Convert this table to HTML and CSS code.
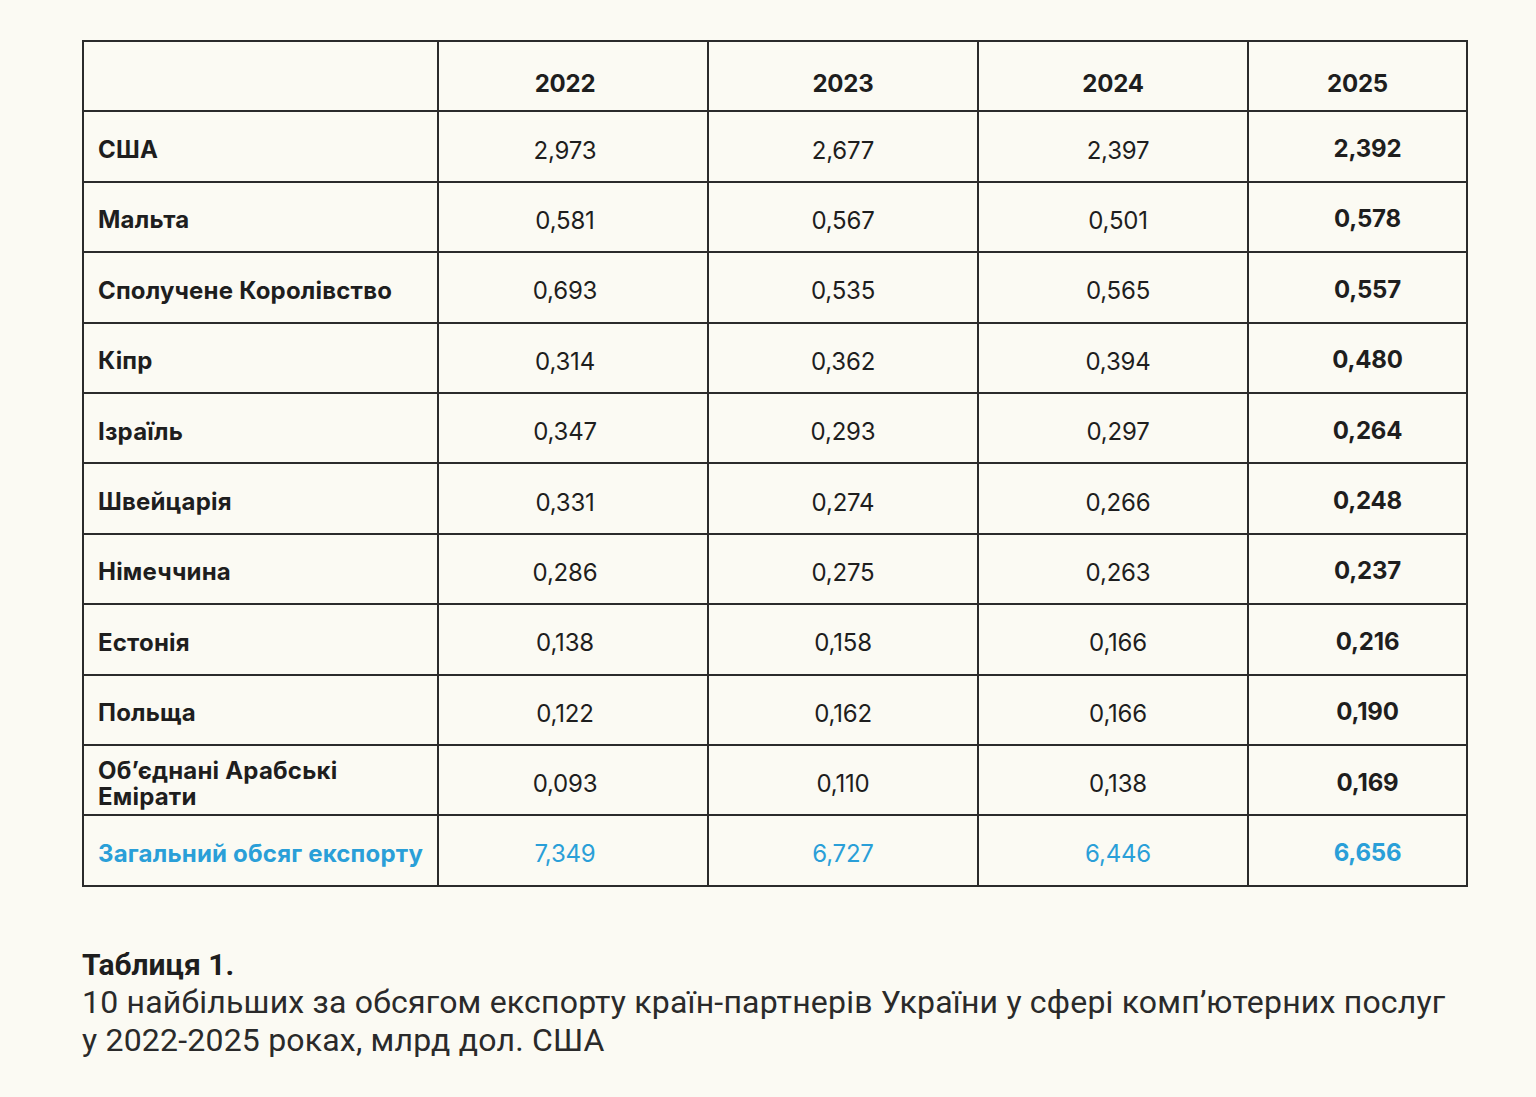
FILE: index.html
```html
<!DOCTYPE html>
<html>
  <head>
    <meta charset="utf-8" />
    <link rel="stylesheet" href="styles.css">
  </head>
  <body>
    <div class="page">
      <table class="export-table">
        <colgroup>
          <col class="col-name">
          <col class="col-year">
          <col class="col-year">
          <col class="col-year">
          <col class="col-last">
        </colgroup>
        <thead>
          <tr>
            <th></th>
            <th class="first">2022</th>
            <th>2023</th>
            <th>2024</th>
            <th>2025</th>
          </tr>
        </thead>
        <tbody>
          <tr>
            <td class="name">США</td>
            <td class="first">2,973</td><td>2,677</td><td class="third">2,397</td><td class="last">2,392</td>
          </tr>
          <tr>
            <td class="name">Мальта</td>
            <td class="first">0,581</td><td>0,567</td><td class="third">0,501</td><td class="last">0,578</td>
          </tr>
          <tr>
            <td class="name">Сполучене Королівство</td>
            <td class="first">0,693</td><td>0,535</td><td class="third">0,565</td><td class="last">0,557</td>
          </tr>
          <tr>
            <td class="name">Кіпр</td>
            <td class="first">0,314</td><td>0,362</td><td class="third">0,394</td><td class="last">0,480</td>
          </tr>
          <tr>
            <td class="name">Ізраїль</td>
            <td class="first">0,347</td><td>0,293</td><td class="third">0,297</td><td class="last">0,264</td>
          </tr>
          <tr>
            <td class="name">Швейцарія</td>
            <td class="first">0,331</td><td>0,274</td><td class="third">0,266</td><td class="last">0,248</td>
          </tr>
          <tr>
            <td class="name">Німеччина</td>
            <td class="first">0,286</td><td>0,275</td><td class="third">0,263</td><td class="last">0,237</td>
          </tr>
          <tr>
            <td class="name">Естонія</td>
            <td class="first">0,138</td><td>0,158</td><td class="third">0,166</td><td class="last">0,216</td>
          </tr>
          <tr>
            <td class="name">Польща</td>
            <td class="first">0,122</td><td>0,162</td><td class="third">0,166</td><td class="last">0,190</td>
          </tr>
          <tr>
            <td class="name">Об’єднані Арабські<br>Емірати</td>
            <td class="first">0,093</td><td>0,110</td><td class="third">0,138</td><td class="last">0,169</td>
          </tr>
          <tr class="total">
            <td class="name">Загальний обсяг експорту</td>
            <td class="first">7,349</td><td>6,727</td><td class="third">6,446</td><td class="last">6,656</td>
          </tr>
        </tbody>
      </table>

      <div class="caption">
        <p class="caption-title">Таблиця 1.</p>
        <p class="caption-text">10 найбільших за обсягом експорту країн-партнерів України у сфері комп’ютерних послуг<br>у 2022-2025 роках, млрд дол. США</p>
      </div>
    </div>
  </body>
</html>
```

FILE: styles.css
```css
* {
  margin: 0;
  padding: 0;
  box-sizing: border-box;
}

body {
  background: #fbfaf3;
  color: #1e1e1e;
  font-family: Inter, "Noto Sans", sans-serif;
}

.page {
  padding: 40px 0 0 82px;
  width: 1467px;
}

/* Table */
.export-table {
  width: 1384px;
  border-collapse: collapse;
  table-layout: fixed;
}

.col-name {
  width: 355px;
}

.col-year {
  width: 270px;
}

.col-last {
  width: 219px;
}

.export-table th,
.export-table td {
  border: 2px solid #2b2b2b;
  height: 70.4px;
  text-align: center;
  vertical-align: middle;
  font-size: 24px;
  font-weight: 400;
  padding: 7px 14px 0;
  letter-spacing: -0.2px;
}

.export-table th {
  font-weight: 700;
  padding-top: 15px;
}

.export-table .first {
  padding-right: 30px;
}

.export-table .third {
  padding-left: 24px;
}

.export-table td.name {
  text-align: left;
  font-weight: 700;
  font-size: 24px;
  line-height: 26px;
  letter-spacing: 0.2px;
  padding-left: 14px;
  padding-right: 4px;
}

.export-table td.last {
  font-weight: 700;
  padding-left: 34px;
  padding-top: 4px;
}

.total td {
  color: #2a9fd8;
}

/* Caption */
.caption {
  margin-top: 60px;
  font-family: Roboto, "Noto Sans", sans-serif;
}

.caption-title {
  font-size: 30px;
  font-weight: 700;
  line-height: 36px;
}

.caption-text {
  font-size: 32px;
  line-height: 38px;
  letter-spacing: 0.2px;
  color: #2a2a2a;
  white-space: nowrap;
}
```
